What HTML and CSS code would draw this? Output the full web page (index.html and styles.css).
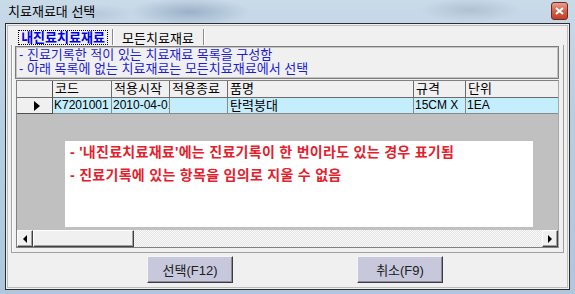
FILE: index.html
```html
<!DOCTYPE html>
<html lang="ko">
<head>
    <meta charset="UTF-8">
    <title>치료재료대 선택</title>
    <link rel="stylesheet" href="styles.css">
</head>
<body>
    <div class="window">
        <div class="titlebar">
            <span class="title">치료재료대 선택</span>
            <div class="close-btn">
                <svg width="9" height="8" viewBox="0 0 9 8">
                    <path d="M1 1 L8 7 M8 1 L1 7" stroke="#fff" stroke-width="2" fill="none"/>
                </svg>
            </div>
        </div>

        <div class="client">
            <div class="frame">
                <div class="tabs">
                    <div class="tab active"><span>내진료치료재료</span></div>
                    <div class="tab">모든치료재료</div>
                </div>

                <div class="panel">
                    <div class="info">
                        <div>- 진료기록한 적이 있는 치료재료 목록을 구성함</div>
                        <div>- 아래 목록에 없는 치료재료는 모든치료재료에서 선택</div>
                    </div>

                    <div class="grid">
                        <div class="row head">
                            <div class="cell ind"></div>
                            <div class="cell c1">코드</div>
                            <div class="cell c2">적용시작</div>
                            <div class="cell c3">적용종료</div>
                            <div class="cell c4">품명</div>
                            <div class="cell c5">규격</div>
                            <div class="cell c6">단위</div>
                        </div>
                        <div class="row data">
                            <div class="cell ind"><i class="arrow"></i></div>
                            <div class="cell c1 num">K7201001</div>
                            <div class="cell c2 num">2010-04-01</div>
                            <div class="cell c3"></div>
                            <div class="cell c4">탄력붕대</div>
                            <div class="cell c5 num">15CM X</div>
                            <div class="cell c6 num">1EA</div>
                        </div>
                        <div class="empty"></div>
                        <div class="hscroll">
                            <div class="sbtn"><i class="tri left"></i></div>
                            <div class="thumb"></div>
                            <div class="track"></div>
                            <div class="sbtn"><i class="tri right"></i></div>
                        </div>

                        <div class="notice">
                            <p>- '내진료치료재료'에는 진료기록이 한 번이라도 있는 경우 표기됨</p>
                            <p>- 진료기록에 있는 항목을 임의로 지울 수 없음</p>
                        </div>
                    </div>
                </div>

                <div class="buttons">
                    <button class="btn">선택(F12)</button>
                    <button class="btn">취소(F9)</button>
                </div>
            </div>
        </div>
    </div>
</body>
</html>
```

FILE: styles.css
```css
body {
    margin: 0;
    padding: 0;
    font-family: "Liberation Sans", "Noto Sans CJK KR", sans-serif;
    font-size: 13px;
    overflow: hidden;
}

.window {
    width: 575px;
    height: 294px;
    background:
        radial-gradient(ellipse 60px 14px at 190px 12px, rgba(120, 145, 175, 0.55), transparent),
        radial-gradient(ellipse 50px 12px at 470px 10px, rgba(150, 165, 185, 0.45), transparent),
        radial-gradient(ellipse 40px 10px at 95px 14px, rgba(150, 170, 195, 0.35), transparent),
        linear-gradient(to bottom, #c9dae9, #b7cde2 40%, #b0c6dc);
    box-sizing: border-box;
}

.titlebar {
    height: 23px;
    display: flex;
    align-items: center;
    padding-left: 8px;
    box-sizing: border-box;
}

.title {
    color: #000;
    font-size: 13px;
    margin-top: -2px;
}

.close-btn {
    margin-left: auto;
    margin-right: 7px;
    margin-top: -2px;
    width: 15px;
    height: 16px;
    border: 1px solid #6e2a1c;
    border-radius: 3px;
    background: linear-gradient(to bottom, #e9a090, #d3614a 50%, #c0402a);
    display: flex;
    align-items: center;
    justify-content: center;
}

.client {
    margin: 0 5px;
    height: 267px;
    border: 1px solid #2e2e2e;
    background: #f0f0f0;
    padding: 1px;
    box-sizing: border-box;
}

.frame {
    height: 100%;
    border: 1px solid #bdbdbd;
    box-sizing: border-box;
    padding: 2px 3px 0 3px;
}

.tabs {
    display: flex;
    height: 17px;
    padding-left: 3px;
}

.tab {
    display: flex;
    align-items: center;
    justify-content: center;
    height: 16px;
    margin-top: 1px;
    border-right: 1px solid #8a8a8a;
    box-shadow: 1px 0 0 #fff;
    color: #000;
}

.tab:first-child {
    width: 98px;
}

.tab:nth-child(2) {
    width: 90px;
}

.tab.active span {
    color: #0000e6;
    font-weight: bold;
    border: 1px dotted #000;
    padding: 0 2px;
    line-height: 13px;
}

.panel {
    height: 208px;
    border: 1px solid #a0a0a0;
    border-top: none;
    box-shadow: inset 1px 0 0 #fff;
    padding: 1px 4px 0 4px;
    box-sizing: border-box;
}

.info {
    height: 33px;
    border: 1px solid #7c7c7c;
    box-shadow: inset 0 0 0 1px #c4c4c4;
    color: #1c1cd6;
    padding: 1px 0 0 3px;
    line-height: 14px;
    box-sizing: border-box;
    margin-left: -1px;
    margin-bottom: 1px;
}

.grid {
    position: relative;
    width: 543px;
    height: 168px;
    border: 1px solid #808080;
    border-right-color: #a8a8a8;
    background: #c0c0c0;
    box-sizing: border-box;
    display: flex;
    flex-direction: column;
}

.row {
    display: flex;
}

.row.head {
    height: 17px;
    background: #f0f0f0;
}

.row.data {
    height: 16px;
    background: #c4eefc;
}

.cell {
    border-right: 1px solid #6c6c6c;
    border-bottom: 1px solid #6c6c6c;
    box-sizing: border-box;
    padding-left: 2px;
    white-space: nowrap;
    overflow: hidden;
    line-height: 15px;
    color: #000;
}

.cell.num {
    font-size: 12px;
    padding-left: 1px;
}

.row.data .cell {
    border-right-color: #8a8a8a;
    border-bottom-color: #8a8a8a;
}

.ind {
    width: 36px;
    background: #f0f0f0;
    display: flex;
    align-items: center;
    justify-content: center;
    border-right-color: #505050;
}

.row.data .ind {
    border-right-color: #505050;
    border-bottom-color: #505050;
}

.c1 { width: 59px; }
.c2 { width: 58px; }
.c3 { width: 58px; }
.c4 { width: 186px; }
.c5 { width: 52px; }
.c6 { flex: 1; border-right: none; }

.arrow {
    width: 0;
    height: 0;
    border-left: 6px solid #000;
    border-top: 5px solid transparent;
    border-bottom: 5px solid transparent;
    margin-left: 2px;
}

.empty {
    flex: 1;
}

.hscroll {
    height: 17px;
    display: flex;
}

.sbtn {
    width: 16px;
    height: 17px;
    background: #f0f0f0;
    border: 1px solid;
    border-color: #fff #404040 #404040 #fff;
    box-shadow: inset -1px -1px 0 #a0a0a0;
    box-sizing: border-box;
    display: flex;
    align-items: center;
    justify-content: center;
}

.thumb {
    width: 101px;
    height: 17px;
    background: #f0f0f0;
    border: 1px solid;
    border-color: #fff #404040 #404040 #fff;
    box-shadow: inset -1px -1px 0 #a0a0a0;
    box-sizing: border-box;
}

.track {
    flex: 1;
    background-color: #f6f6f6;
    background-image: repeating-conic-gradient(#e4e4e4 0 25%, #fafafa 0 50%);
    background-size: 2px 2px;
}

.tri {
    width: 0;
    height: 0;
    border-top: 4px solid transparent;
    border-bottom: 4px solid transparent;
}

.tri.left {
    border-right: 4px solid #000;
}

.tri.right {
    border-left: 4px solid #000;
}

.notice {
    position: absolute;
    left: 48px;
    top: 60px;
    width: 468px;
    height: 86px;
    background: #fff;
    color: #e4202c;
    font-weight: bold;
    font-size: 14px;
    letter-spacing: 0.3px;
    padding: 0 0 0 5px;
    box-sizing: border-box;
}

.notice p {
    margin: 0;
    line-height: 23px;
}

.buttons {
    display: flex;
    gap: 124px;
    padding-left: 136px;
    margin-top: 3px;
}

.btn {
    width: 86px;
    height: 27px;
    background: #c8c8dc;
    border: 1px solid;
    border-color: #f4f4f8 #3c3c3c #3c3c3c #f4f4f8;
    box-shadow: inset -1px -1px 0 #8c8c9c;
    font-family: "Liberation Sans", "Noto Sans CJK KR", sans-serif;
    font-size: 13px;
    color: #202020;
    padding: 0;
}
```
